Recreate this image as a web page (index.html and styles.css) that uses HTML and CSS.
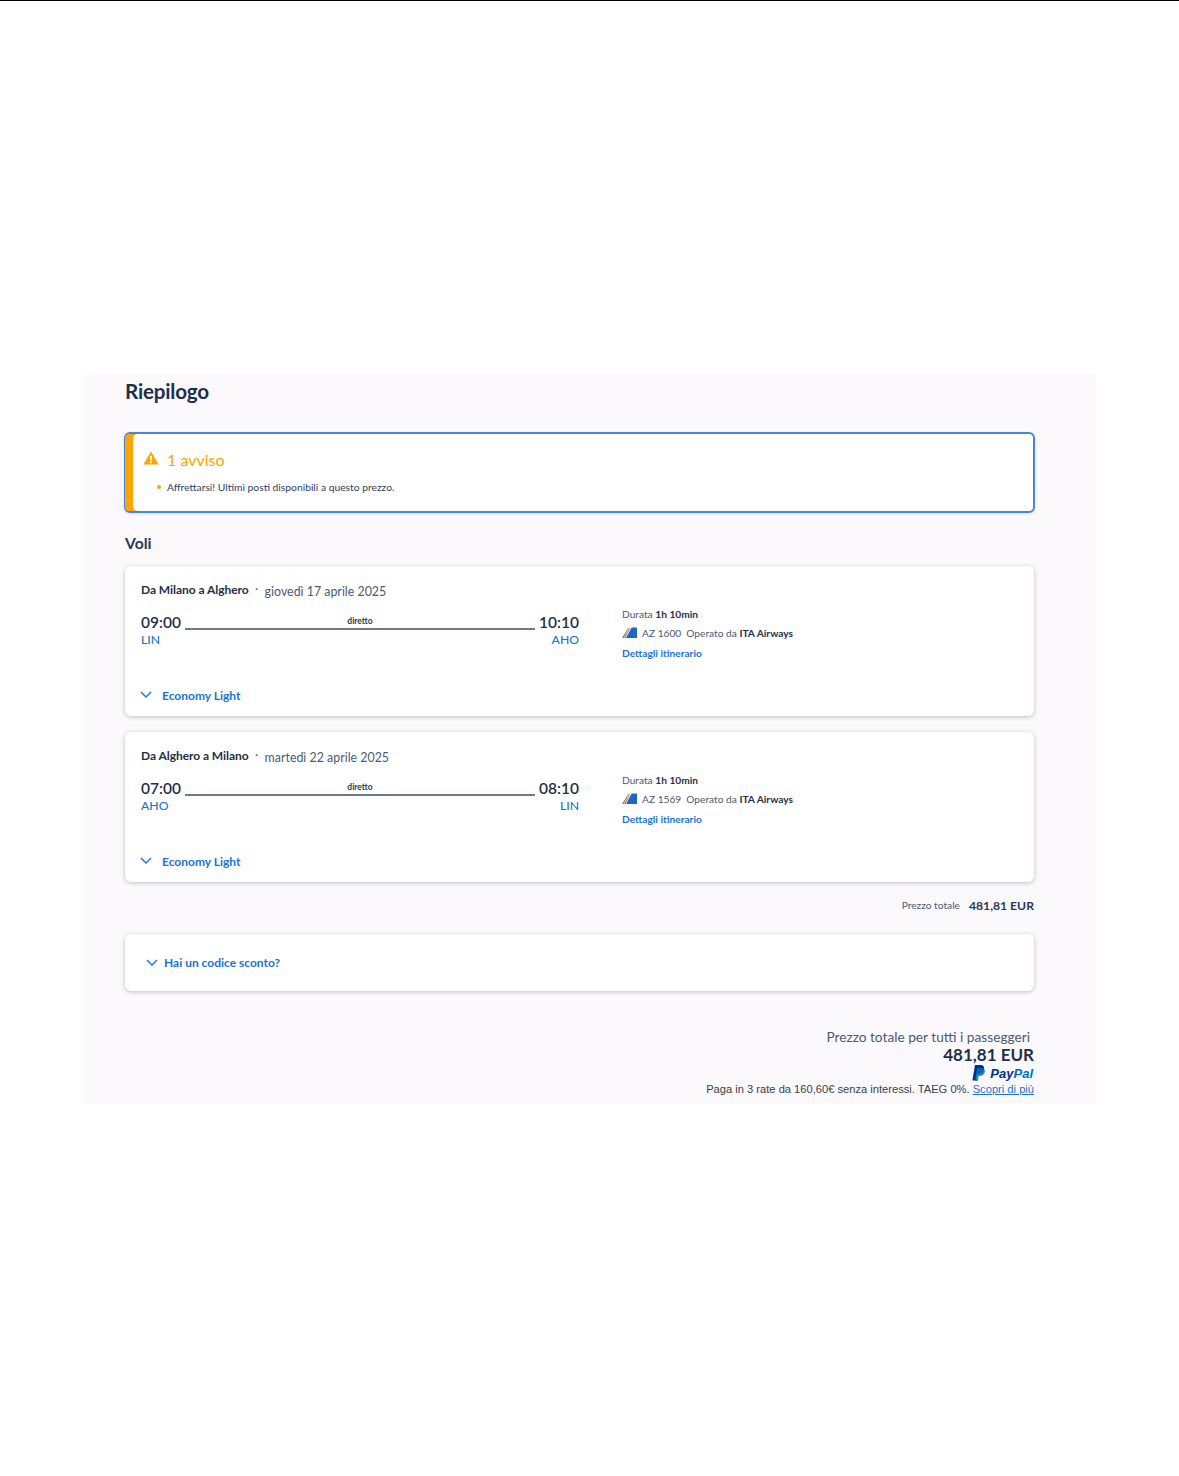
FILE: index.html
```html
<!DOCTYPE html>
<html lang="it">
<head>
    <meta charset="UTF-8">
    <title>Riepilogo</title>
    <link rel="stylesheet" href="styles.css">
</head>
<body>
    <div class="panel">
        <h1 class="title">Riepilogo</h1>

        <div class="alert">
            <div class="alert-head">
                <svg class="alert-icon" width="16" height="14" viewBox="0 0 16 14">
                    <path d="M8 0.5 L15.6 13.6 H0.4 Z" fill="#ffa400"/>
                    <rect x="7.1" y="4.8" width="1.8" height="4.6" fill="#fff"/>
                    <rect x="7.1" y="10.4" width="1.8" height="1.8" fill="#fff"/>
                </svg>
                <span>1 avviso</span>
            </div>
            <div class="alert-msg"><i class="dot"></i>Affrettarsi! Ultimi posti disponibili a questo prezzo.</div>
        </div>

        <h2 class="section">Voli</h2>

        <div class="card flight">
            <div class="flight-title"><b>Da Milano a Alghero</b><i class="sep">·</i><span>giovedì 17 aprile 2025</span></div>
            <div class="flight-body">
                <div class="route">
                    <div class="stop">
                        <div class="time">09:00</div>
                        <div class="iata">LIN</div>
                    </div>
                    <div class="line"><span>diretto</span></div>
                    <div class="stop right">
                        <div class="time">10:10</div>
                        <div class="iata">AHO</div>
                    </div>
                </div>
                <div class="info">
                    <div>Durata <b>1h 10min</b></div>
                    <div class="carrier">
                        <svg width="15" height="12" viewBox="0 0 15 12">
                            <path d="M0 11 L6.4 1 H7 L1.4 11 Z" fill="#c8453a"/>
                            <path d="M2 11 L7.6 1 H8.2 L3.3 11 Z" fill="#4f9a5c"/>
                            <path d="M4 11 L9.6 0.5 H15 V11 Z" fill="#1f66c4"/>
                        </svg>
                        <span>AZ 1600</span>
                        <span>Operato da <b>ITA Airways</b></span>
                    </div>
                    <a class="link" href="#">Dettagli itinerario</a>
                </div>
            </div>
            <div class="fare">
                <svg class="chev" width="12" height="7" viewBox="0 0 12 7"><path d="M1 1 L6 6 L11 1" fill="none" stroke="#1a73d4" stroke-width="1.4"/></svg>
                <span>Economy Light</span>
            </div>
        </div>

        <div class="card flight">
            <div class="flight-title"><b>Da Alghero a Milano</b><i class="sep">·</i><span>martedì 22 aprile 2025</span></div>
            <div class="flight-body">
                <div class="route">
                    <div class="stop">
                        <div class="time">07:00</div>
                        <div class="iata">AHO</div>
                    </div>
                    <div class="line"><span>diretto</span></div>
                    <div class="stop right">
                        <div class="time">08:10</div>
                        <div class="iata">LIN</div>
                    </div>
                </div>
                <div class="info">
                    <div>Durata <b>1h 10min</b></div>
                    <div class="carrier">
                        <svg width="15" height="12" viewBox="0 0 15 12">
                            <path d="M0 11 L6.4 1 H7 L1.4 11 Z" fill="#c8453a"/>
                            <path d="M2 11 L7.6 1 H8.2 L3.3 11 Z" fill="#4f9a5c"/>
                            <path d="M4 11 L9.6 0.5 H15 V11 Z" fill="#1f66c4"/>
                        </svg>
                        <span>AZ 1569</span>
                        <span>Operato da <b>ITA Airways</b></span>
                    </div>
                    <a class="link" href="#">Dettagli itinerario</a>
                </div>
            </div>
            <div class="fare">
                <svg class="chev" width="12" height="7" viewBox="0 0 12 7"><path d="M1 1 L6 6 L11 1" fill="none" stroke="#1a73d4" stroke-width="1.4"/></svg>
                <span>Economy Light</span>
            </div>
        </div>

        <div class="subtotal"><span>Prezzo totale</span><b>481,81 EUR</b></div>

        <div class="card discount">
            <svg width="12" height="7" viewBox="0 0 12 7"><path d="M1 1 L6 6 L11 1" fill="none" stroke="#1a73d4" stroke-width="1.4"/></svg>
            <span>Hai un codice sconto?</span>
        </div>

        <div class="total">
            <div class="total-label">Prezzo totale per tutti i passeggeri</div>
            <div class="total-price">481,81 EUR</div>
            <div class="paypal">
                <svg width="13" height="16" viewBox="0 0 13 16">
                    <path d="M3 0 H8.5 C11.5 0 12.6 2 12 4.6 C11.3 7.6 9.2 9 6.5 9 H4.8 L3.8 15.6 H0.4 Z" fill="#003087"/>
                    <path d="M5 3 H9 C12 3 13.4 4.6 12.8 7 C12.2 9.8 10.2 11 7.8 11 H6.6 L5.8 16 H3 Z" fill="#0070ba" opacity=".85"/>
                </svg>
                <span class="pay">Pay</span><span class="pal">Pal</span>
            </div>
            <div class="installments">Paga in 3 rate da 160,60€ senza interessi. TAEG 0%. <a href="#">Scopri di più</a></div>
        </div>
    </div>
</body>
</html>
```

FILE: styles.css
```css
* {box-sizing: border-box;}
body {
    margin: 0;
    height: 1476px;
    padding-top: 374px;
    background: #fff;
    border-top: 1px solid #000;
    font-family: 'Lato', sans-serif;
    color: #1f2f4a;
    overflow: hidden;
}
.panel {
    margin-left: 84px;
    margin-top: -1px;
    width: 1012px;
    height: 730px;
    padding: 4px 62px 0 41px;
    background: #fbf9fb;
}
.title {
    margin: 0;
    height: 26px;
    font-size: 20.6px;
    line-height: 26px;
    font-weight: 700;
    color: #1c2f4d;
    letter-spacing: -0.2px;
}
.alert {
    margin-top: 28px;
    margin-left: -1px;
    margin-right: -1px;
    height: 81px;
    padding: 13px 0 0 16px;
    background: #fff;
    border: 2px solid #4a86d8;
    border-left-width: 1px;
    border-radius: 6px;
    box-shadow: inset 8px 0 0 #ffa400, 0 1px 3px rgba(0, 0, 0, .12);
}
.alert-head {
    display: flex;
    align-items: center;
    gap: 8px;
    height: 24px;
    margin-left: 2px;
    font-size: 16px;
    color: #ffa400;
}
.alert-icon {margin-top: -3px;}
.alert-msg {
    display: flex;
    align-items: center;
    margin-top: 9px;
    margin-left: 16px;
    font-size: 10.3px;
    line-height: 14px;
    color: #33415c;
}
.dot {
    width: 4px;
    height: 4px;
    margin-right: 6px;
    border-radius: 50%;
    background: #ffa400;
}
.section {
    margin: 19px 0 0;
    height: 22px;
    font-size: 15.7px;
    line-height: 22px;
    font-weight: 700;
    color: #2a3a55;
}
.card {
    background: #fff;
    border-radius: 6px;
    box-shadow: 0 1px 4px rgba(40, 40, 60, .28);
}
.flight {
    height: 150px;
    margin-top: 12px;
    margin-bottom: 16px;
    padding: 16px 16px 0;
}
.flight + .flight {margin-top: 0;}
.flight-title {
    display: flex;
    align-items: center;
    height: 16px;
    font-size: 12px;
    line-height: 16px;
    color: #4a5a75;
}
.flight-title b {
    font-weight: 700;
    color: #1f2f4a;
    letter-spacing: -0.05px;
}
.flight-title span {
    margin-top: 4px;
    font-size: 12.4px;
}
.sep {
    width: 16px;
    margin-top: -3px;
    text-align: center;
    font-style: normal;
}
.flight-body {
    display: flex;
    margin-top: 8px;
}
.route {
    display: flex;
    width: 438px;
    margin-top: 5px;
}
.stop {
    width: 44px;
    flex: none;
}
.stop.right {
    width: 43px;
    text-align: right;
}
.time {
    font-size: 15.5px;
    line-height: 22px;
    font-weight: 600;
    color: #1f2f4a;
}
.iata {
    font-size: 12.2px;
    line-height: 13px;
    font-weight: 500;
    color: #1a73d4;
}
.line {
    flex: 1;
    height: 16px;
    margin-top: 3px;
    margin-right: 1px;
    padding-top: 2px;
    border-bottom: 2px solid #6d788c;
    text-align: center;
    font-size: 8.5px;
    line-height: 10px;
    font-weight: 700;
    color: #2a3a55;
}
.info {
    margin-left: 43px;
    padding-top: 1px;
    font-size: 10.2px;
    line-height: 14px;
    color: #4a5a75;
}
.info b {color: #1f2f4a;}
.carrier {
    display: flex;
    align-items: center;
    gap: 5px;
    margin-top: 5px;
}
.link {
    display: block;
    margin-top: 6px;
    color: #1a73d4;
    font-weight: 700;
    text-decoration: none;
}
.fare {
    display: flex;
    align-items: center;
    gap: 10px;
    margin-top: 28px;
    margin-left: -1px;
    font-size: 12px;
    line-height: 16px;
    font-weight: 700;
    color: #1a73d4;
}
.chev {margin-top: -3px;}
.subtotal {
    display: flex;
    justify-content: flex-end;
    align-items: center;
    gap: 9px;
    height: 16px;
    margin-top: -1px;
    font-size: 12.2px;
}
.subtotal span {
    font-size: 10.2px;
    color: #4a5a75;
}
.subtotal b {
    font-weight: 700;
    color: #2a3a55;
}
.discount {
    display: flex;
    align-items: center;
    gap: 6px;
    height: 57px;
    margin-top: 21px;
    padding-left: 21px;
    font-size: 12px;
    font-weight: 700;
    color: #1a73d4;
}
.total {
    margin-top: 37px;
    text-align: right;
}
.total-label {
    height: 17px;
    padding-right: 4px;
    font-size: 13.7px;
    line-height: 18px;
    color: #4a5a75;
}
.total-price {
    height: 19px;
    font-size: 17px;
    line-height: 19px;
    font-weight: 700;
    color: #1f2f4a;
}
.paypal {
    display: flex;
    justify-content: flex-end;
    align-items: center;
    height: 18px;
    padding-right: 1px;
    font-family: 'Liberation Sans', sans-serif;
    font-size: 13px;
    font-weight: 700;
    font-style: italic;
}
.paypal svg {margin-right: 5px;}
.pay {color: #003087;}
.pal {color: #0070ba;}
.installments {
    height: 14px;
    font-family: 'Liberation Sans', sans-serif;
    font-size: 11.15px;
    line-height: 14px;
    color: #3a3f48;
}
.installments a {color: #1a73d4;}
```
